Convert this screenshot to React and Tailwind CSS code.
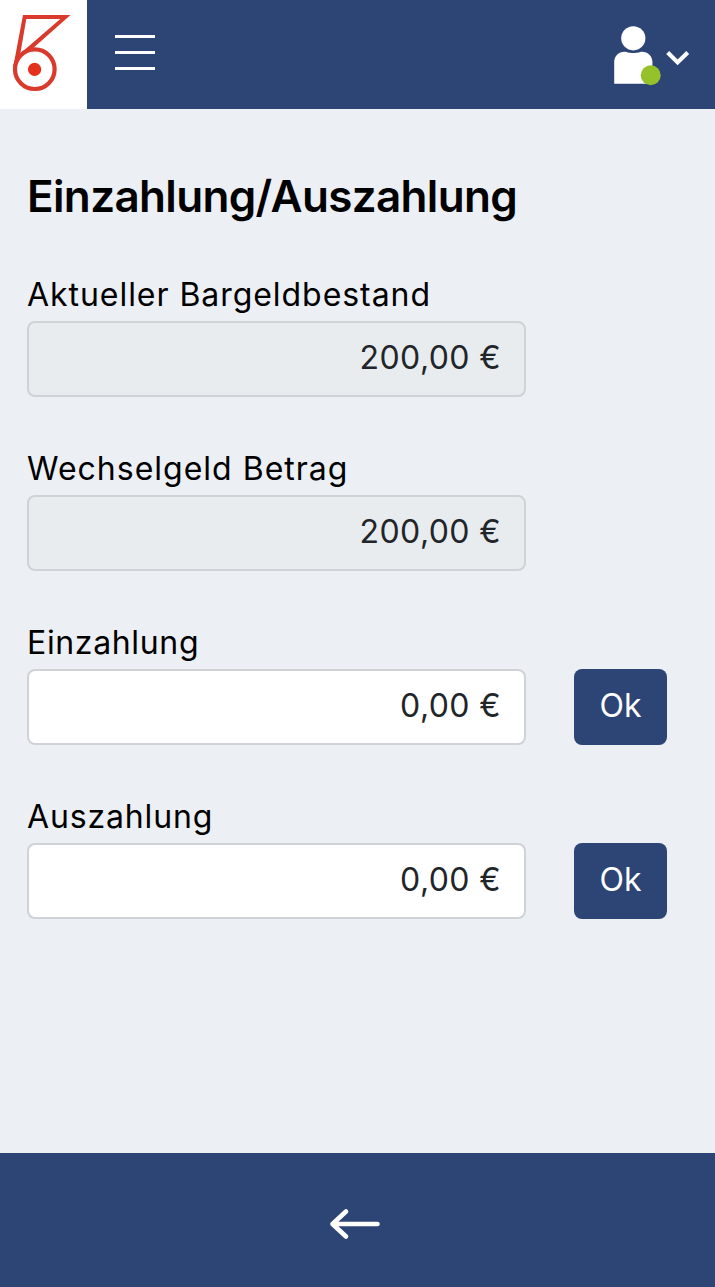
import { useState } from 'react'

const fields = [
    { id: 'bestand', label: 'Aktueller Bargeldbestand', tracking: 'tracking-[0.95px]', readOnly: true },
    { id: 'wechselgeld', label: 'Wechselgeld Betrag', tracking: 'tracking-[1px]', readOnly: true },
    { id: 'einzahlung', label: 'Einzahlung', tracking: 'tracking-[0.65px]' },
    { id: 'auszahlung', label: 'Auszahlung', tracking: 'tracking-[0.85px]' },
]

function Logo() {
    return (
        <svg width="87" height="109" viewBox="0 0 87 109" className="block bg-white">
            <path
                fill="#d93a2b"
                fillRule="evenodd"
                d="M23 15H70.5L31 50L18 60L13 68ZM26.3 19L20.3 53.5L60.3 19Z"
            />
            <circle cx="34.8" cy="69.2" r="19.8" fill="#fff" stroke="#d93a2b" strokeWidth="4.2" />
            <circle cx="34.6" cy="69.4" r="6.6" fill="#e5301f" />
        </svg>
    )
}

function UserIcon() {
    return (
        <svg width="48" height="62" viewBox="0 0 48 62">
            <circle cx="19.3" cy="14.3" r="12.1" fill="#fff" />
            <path
                fill="#fff"
                d="M0.2 59.7V38C0.2 32 4.5 27.7 10.5 27.7C13 27.7 14.5 29 19.3 29C24 29 25.5 27.7 28 27.7C34 27.7 38.4 32 38.4 38V59.7Z"
            />
            <circle cx="36.7" cy="51.3" r="10" fill="#95c12b" />
        </svg>
    )
}

function Header() {
    return (
        <header className="flex h-[109px] items-center bg-[#2d4575]">
            <Logo />
            <button type="button" aria-label="Menü" className="mb-[5px] ml-7 flex w-10 flex-col gap-[13px]">
                <span className="h-[3px] w-full bg-white" />
                <span className="h-[3px] w-full bg-white" />
                <span className="h-[3px] w-full bg-white" />
            </button>
            <button type="button" aria-label="Benutzer" className="mr-[25px] ml-auto flex items-center gap-1">
                <UserIcon />
                <svg width="24" height="16" viewBox="0 0 24 16" fill="none" stroke="#fff" strokeWidth="4.2" className="mt-1.5">
                    <path d="M1.7 2.5L11.6 12.4L21.7 2.5" />
                </svg>
            </button>
        </header>
    )
}

export default function App() {
    const [values, setValues] = useState({
        bestand: '200,00 €',
        wechselgeld: '200,00 €',
        einzahlung: '0,00 €',
        auszahlung: '0,00 €',
    })

    return (
        <div className="flex h-[1287px] w-full flex-col bg-[#eceff4] font-['Inter',sans-serif] text-black">
            <Header />

            <main className="flex-1 px-7 pt-[53px]">
                <h1 className="-ml-px h-[111px] text-[44px] leading-[68px] font-semibold tracking-[-0.65px] whitespace-nowrap">
                    Einzahlung/Auszahlung
                </h1>

                <div className="-ml-px flex flex-col gap-[50px]">
                    {fields.map(f => (
                        <div key={f.id}>
                            <label
                                htmlFor={f.id}
                                className={`block h-12 text-[32px] leading-[43px] whitespace-nowrap ${f.tracking}`}
                            >
                                {f.label}
                            </label>
                            <div className="flex gap-12">
                                <input
                                    id={f.id}
                                    value={values[f.id]}
                                    readOnly={f.readOnly}
                                    onChange={e => setValues({ ...values, [f.id]: e.target.value })}
                                    className="h-[76px] w-[499px] rounded-lg border-2 border-[#cfd2d6] bg-white pr-[23px] pb-[3px] pl-6 text-right text-[32px] tracking-[0.4px] text-[#212529] outline-none read-only:bg-[#e8ecef]"
                                />
                                {!f.readOnly && (
                                    <button
                                        type="button"
                                        className="h-[76px] w-[93px] rounded-lg bg-[#2d4575] pb-[3px] text-[32px] text-white"
                                    >
                                        Ok
                                    </button>
                                )}
                            </div>
                        </div>
                    ))}
                </div>
            </main>

            <footer className="flex h-[134px] justify-center bg-[#2d4575] pt-[54px] pr-[5px]">
                <button type="button" aria-label="Zurück" className="h-[34px]">
                    <svg width="52" height="34" viewBox="0 0 52 34" fill="none" stroke="#fff" strokeWidth="4.6" strokeLinecap="round" strokeLinejoin="round">
                        <path d="M48.5 17H3.5M17 4.5L3.5 17L17 29.5" />
                    </svg>
                </button>
            </footer>
        </div>
    )
}
